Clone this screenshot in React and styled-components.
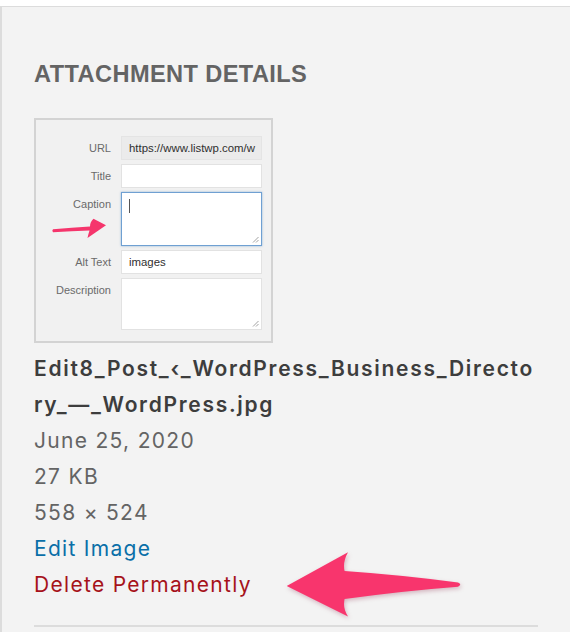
import React from 'react'
import styled, { createGlobalStyle } from 'styled-components'

const GlobalStyle = createGlobalStyle`
  html, body {
    margin: 0;
    padding: 0;
    background: #ffffff;
  }
  body {
    font-family: Inter, "Noto Sans", sans-serif;
  }
`

const Panel = styled.section`
  position: relative;
  box-sizing: border-box;
  margin-top: 6px;
  min-height: calc(100vh - 6px);
  padding: 52px 32px 0 32px;
  background: #f3f3f3;
  border-top: 1px solid #dcdcdc;
  border-left: 2px solid #dcdcdc;
`

const Heading = styled.h2`
  margin: 0 0 29px;
  font-family: "Liberation Sans", Arial, sans-serif;
  font-size: 23.6px;
  line-height: 30px;
  font-weight: 700;
  letter-spacing: 0.4px;
  text-transform: uppercase;
  color: #646464;
`

const Thumb = styled.div`
  position: relative;
  box-sizing: border-box;
  width: 239px;
  height: 225px;
  border: 2px solid #d3d3d3;
  background: #f1f1f1;
  overflow: hidden;
`

const FormGrid = styled.div`
  display: grid;
  grid-template-columns: 75px 141px;
  grid-template-rows: 24px 24px 54px 24px 52px;
  column-gap: 10px;
  row-gap: 4px;
  padding: 16px 9px 0 0;
  font-family: "Liberation Sans", Arial, sans-serif;
  font-size: 11px;
`

const Label = styled.div`
  padding-top: 5px;
  line-height: 14px;
  text-align: right;
  color: #6a6a6a;
`

const Field = styled.div`
  position: relative;
  box-sizing: border-box;
  display: flex;
  align-items: ${p => (p.$tall ? 'flex-start' : 'center')};
  padding: ${p => (p.$tall ? '6px 7px' : '0 7px')};
  white-space: nowrap;
  overflow: hidden;
  font-size: 11.4px;
  color: #2f2f2f;
  background: ${p => (p.$readonly ? '#ebebeb' : '#ffffff')};
  border: 1px solid ${p => (p.$focus ? '#6fa0d2' : p.$readonly ? '#e4e4e4' : '#e2e2e2')};
  box-shadow: ${p => (p.$focus ? '0 0 2px rgba(80, 140, 200, 0.6)' : 'none')};
`

const Caret = styled.span`
  display: block;
  width: 1px;
  height: 14px;
  background: #555;
`

const Grip = styled.svg`
  position: absolute;
  right: 2px;
  bottom: 2px;
  width: 7px;
  height: 7px;
`

const Overlay = styled.svg`
  position: absolute;
  pointer-events: none;
  overflow: visible;
`

const FileName = styled.div`
  margin-top: 8px;
  font-size: 21px;
  line-height: 36px;
  font-weight: 600;
  letter-spacing: 1.7px;
  color: #3d3d3d;
  word-break: break-all;
`

const Meta = styled.div`
  font-size: 21px;
  line-height: 36px;
  letter-spacing: 1.3px;
  color: ${p => p.$color || '#646464'};
`

const Rule = styled.div`
  margin-top: 22px;
  height: 2px;
  background: #dcdcdc;
`

const ResizeGrip = () => (
  <Grip viewBox="0 0 7 7">
    <path d="M6.5 1 L1 6.5 M6.5 4 L4 6.5" stroke="#8a8a8a" strokeWidth="0.8" fill="none" />
  </Grip>
)

const fields = [
  { label: 'URL', value: 'https://www.listwp.com/w', readonly: true },
  { label: 'Title', value: '' },
  { label: 'Caption', focus: true, tall: true, caret: true },
  { label: 'Alt Text', value: 'images' },
  { label: 'Description', tall: true },
]

const App = () => (
  <>
    <GlobalStyle />
    <Panel>
      <Heading>Attachment Details</Heading>
      <Thumb>
        <FormGrid>
          {fields.map(f => (
            <React.Fragment key={f.label}>
              <Label>{f.label}</Label>
              <Field $readonly={f.readonly} $focus={f.focus} $tall={f.tall}>
                {f.caret ? <Caret /> : f.value}
                {f.tall && <ResizeGrip />}
              </Field>
            </React.Fragment>
          ))}
        </FormGrid>
        <Overlay style={{ left: 0, top: 0 }} width="239" height="225" viewBox="0 0 239 225">
          <path
            d="M17 109.2 Q36 107.6 54 106.4 Q54 102 57.5 98.8 L70 105.2 L51.5 118 Q52.5 113.6 53.5 110.6 Q36 111.4 17 112.2 Q15.6 110.7 17 109.2 Z"
            fill="#f5356c"
          />
        </Overlay>
      </Thumb>
      <FileName>Edit8_Post_‹_WordPress_Business_Directory_—_WordPress.jpg</FileName>
      <Meta>June 25, 2020</Meta>
      <Meta>27 KB</Meta>
      <Meta>558 × 524</Meta>
      <Meta $color="#0a6fa8">Edit Image</Meta>
      <Meta $color="#a6121a">Delete Permanently</Meta>
      <Rule />
      <Overlay
        style={{ left: 280, top: 540, filter: 'drop-shadow(1px 2px 2px rgba(120, 0, 40, 0.25))' }}
        width="185"
        height="85"
        viewBox="0 0 185 85"
      >
        <path
          d="M4.7 39 L66 5.3 Q60.5 15 62.6 24 Q120 28 176 35.5 Q180.5 37.6 176 39.7 Q120 44 62.6 52 Q60.5 61 66 69.5 Z"
          fill="#f8356d"
        />
      </Overlay>
    </Panel>
  </>
)

export default App
